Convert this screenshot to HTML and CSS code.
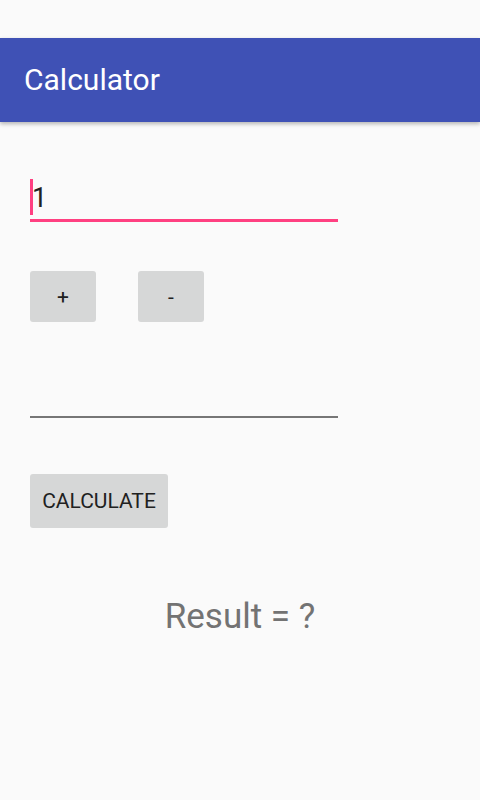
FILE: index.html
```html
<!DOCTYPE html>
<html>
<head>
<meta charset="utf-8">
<link rel="stylesheet" href="styles.css">
</head>
<body>
<div class="status"></div>
<header class="appbar"><span class="title">Calculator</span></header>
<main class="content">
  <div class="field field-active"><span class="cursor"></span><span class="value">1</span></div>
  <div class="ops">
    <button class="btn btn-op">+</button>
    <button class="btn btn-op">-</button>
  </div>
  <div class="field field-idle"></div>
  <button class="btn btn-calc">CALCULATE</button>
  <div class="result">Result = ?</div>
</main>
</body>
</html>
```
FILE: styles.css
```css
html, body {
  margin: 0;
  padding: 0;
  background: #fafafa;
  font-family: Roboto, "Noto Sans", sans-serif;
}
.status {
  height: 38px;
}
.appbar {
  height: 84px;
  background: #3f51b5;
  display: flex;
  align-items: center;
  padding-left: 24px;
  box-shadow: 0 2px 4px rgba(0, 0, 0, 0.28);
  position: relative;
}
.title {
  color: #ffffff;
  font-size: 30px;
  line-height: 30px;
}
.content {
  padding: 0 0 0 30px;
}
.field {
  width: 308px;
  box-sizing: border-box;
}
.field-active {
  margin-top: 48px;
  height: 52px;
  border-bottom: 3px solid #ff4081;
  display: flex;
  align-items: flex-end;
  padding-bottom: 4px;
}
.cursor {
  width: 3px;
  height: 36px;
  background: #ff4081;
  flex: none;
}
.value {
  font-size: 27px;
  line-height: 27px;
  color: #212121;
  margin-left: -1px;
  margin-bottom: 3px;
}
.ops {
  display: flex;
  gap: 42px;
  margin-top: 49px;
}
.btn {
  border: none;
  background: #d6d7d7;
  border-radius: 3px;
  font-family: Roboto, "Noto Sans", sans-serif;
  color: #212121;
  padding: 0;
  display: block;
}
.btn-op {
  width: 66px;
  height: 51px;
  font-size: 21px;
}
.field-idle {
  margin-top: 48px;
  height: 48px;
  border-bottom: 2px solid #767676;
}
.btn-calc {
  margin-top: 56px;
  width: 138px;
  height: 54px;
  font-size: 21px;
}
.result {
  margin-top: 69px;
  margin-left: -30px;
  text-align: center;
  font-size: 35px;
  line-height: 40px;
  color: #737373;
}
```
